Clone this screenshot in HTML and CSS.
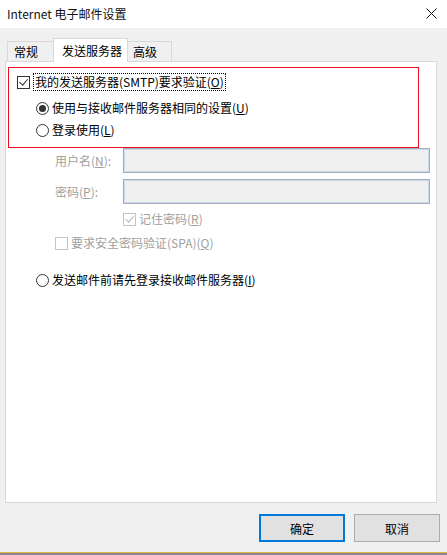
FILE: index.html
```html
<!DOCTYPE html>
<html lang="zh-CN">
    <head>
        <title>Internet 电子邮件设置</title>
        <meta charset="UTF-8">
        <meta name="viewport" content="width=device-width, initial-scale=1">
        <link rel="stylesheet" href="styles.css">
    </head>
    <body>

        <div class="titlebar">
            <span class="title">Internet 电子邮件设置</span>
            <svg class="close" width="11" height="11" viewBox="0 0 11 11">
                <path d="M0.5 0.5 L10.5 10.5 M10.5 0.5 L0.5 10.5" stroke="#111" stroke-width="1" fill="none"/>
            </svg>
        </div>

        <div class="tabs">
            <div class="tab tab-first">常规</div>
            <div class="tab tab-active">发送服务器</div>
            <div class="tab tab-last">高级</div>
        </div>

        <div class="panel">
            <div class="highlight">
                <div class="row row-auth">
                    <span class="check checked"></span>
                    <span class="focus">我的发送服务器(SMTP)要求验证(<u>O</u>)</span>
                </div>
                <div class="row row-same">
                    <span class="radio selected"></span>
                    <span>使用与接收邮件服务器相同的设置(<u>U</u>)</span>
                </div>
                <div class="row row-login">
                    <span class="radio"></span>
                    <span>登录使用(<u>L</u>)</span>
                </div>
            </div>

            <div class="field field-user">
                <label class="field-label">用户名(<u>N</u>):</label>
                <div class="input"></div>
            </div>
            <div class="field field-pass">
                <label class="field-label">密码(<u>P</u>):</label>
                <div class="input"></div>
            </div>

            <div class="row row-remember disabled">
                <span class="check checked"></span>
                <span>记住密码(<u>R</u>)</span>
            </div>
            <div class="row row-spa disabled">
                <span class="check"></span>
                <span>要求安全密码验证(SPA)(<u>Q</u>)</span>
            </div>

            <div class="row row-before">
                <span class="radio"></span>
                <span>发送邮件前请先登录接收邮件服务器(<u>I</u>)</span>
            </div>
        </div>

        <div class="buttons">
            <button class="btn btn-default">确定</button>
            <button class="btn">取消</button>
        </div>

        <div class="taskbar"></div>

    </body>
</html>
```

FILE: styles.css
```css
html {
    box-sizing: border-box;
}
*, *::before, *::after {
    box-sizing: inherit;
}
body {
    margin: 0;
    width: 447px;
    height: 555px;
    overflow: hidden;
    background: #f0f0f0;
    font-family: "Noto Sans CJK SC", "Noto Sans", sans-serif;
    font-size: 12px;
    line-height: 16px;
    color: #000;
}
u {
    text-decoration: underline;
    text-underline-offset: 1px;
}

/* title bar */
.titlebar {
    height: 28px;
    background: #fff;
    display: flex;
    align-items: center;
    justify-content: space-between;
    padding: 0 10px 0 7px;
}
    .titlebar .title {
        font-size: 12px;
        color: #111;
    }
    .titlebar .close {
        margin-top: -1px;
    }

/* tabs */
.tabs {
    margin-top: 10px;
    height: 23px;
    padding-left: 7px;
    display: flex;
    align-items: flex-end;
    position: relative;
    z-index: 1;
}
    .tab {
        height: 20px;
        border: 1px solid #d9d9d9;
        border-bottom: none;
        background: #f0f0f0;
        padding: 1px 0 0 6px;
        line-height: 18px;
    }
    .tab-first {
        width: 46px;
        border-right: none;
    }
    .tab-active {
        width: 75px;
        height: 24px;
        margin-bottom: -1px;
        background: #fff;
        padding: 3px 0 0 8px;
    }
    .tab-last {
        width: 44px;
        border-left: none;
        padding-left: 5px;
    }

/* panel */
.panel {
    margin: 0 10px 0 5px;
    height: 442px;
    background: #fff;
    border: 1px solid #d9d9d9;
    padding: 5px 0 0 2px;
}
    .highlight {
        width: 411px;
        border: 1px solid #e81123;
        padding: 3px 0 6px;
    }
    .row {
        height: 22px;
        display: flex;
        align-items: center;
        white-space: nowrap;
    }
    .row-auth {
        padding-left: 8px;
    }
    .row-same, .row-login {
        padding-left: 27px;
    }
    .row-same {
        margin-top: 4px;
    }

    .check {
        width: 13px;
        height: 13px;
        border: 1px solid #333;
        background: #fff;
        margin-right: 3px;
        position: relative;
        flex: none;
    }
    .check.checked::after {
        content: "";
        position: absolute;
        left: 3px;
        top: 0;
        width: 5px;
        height: 8px;
        border: solid #333;
        border-width: 0 1px 1px 0;
        transform: rotate(40deg);
    }
    .focus {
        border: 1px dotted #000;
        padding: 0 1px;
        line-height: 16px;
    }

    .radio {
        width: 13px;
        height: 13px;
        border: 1px solid #333;
        border-radius: 50%;
        background: #fff;
        margin-right: 3px;
        position: relative;
        flex: none;
    }
    .radio.selected::after {
        content: "";
        position: absolute;
        left: 2px;
        top: 2px;
        width: 7px;
        height: 7px;
        border-radius: 50%;
        background: #333;
    }

    /* disabled credential fields */
    .field {
        display: flex;
        align-items: center;
        height: 25px;
        padding-left: 47px;
    }
    .field-pass {
        margin-top: 6px;
    }
        .field-label {
            width: 68px;
            color: #a0a0a0;
        }
        .input {
            width: 307px;
            height: 25px;
            background: #f0f0f0;
            border: 1px solid #a7acb6;
            box-shadow: inset 0 0 0 1px #c9d9ee;
        }

    .disabled {
        color: #a0a0a0;
    }
        .disabled .check {
            border-color: #c4c4c4;
        }
        .disabled .check.checked::after {
            border-color: #b4b4b4;
        }
    .row-remember {
        margin-top: 5px;
        padding-left: 115px;
        height: 20px;
    }
    .row-spa {
        margin-top: 4px;
        padding-left: 47px;
        height: 20px;
    }
    .row-before {
        margin-top: 16px;
        padding-left: 28px;
    }

/* dialog buttons */
.buttons {
    margin-top: 11px;
    height: 28px;
    display: flex;
    justify-content: flex-end;
    gap: 9px;
    padding-right: 7px;
}
    .btn {
        width: 86px;
        height: 28px;
        margin: 0;
        border: 1px solid #adadad;
        background: #e1e1e1;
        font-family: inherit;
        font-size: 12px;
        color: #000;
        padding: 0;
    }
    .btn-default {
        border: 2px solid #0078d7;
    }

.taskbar {
    margin-top: 10px;
    height: 3px;
    border-top: 1px solid #e8b04a;
    background: #8a8a8a;
}
```
